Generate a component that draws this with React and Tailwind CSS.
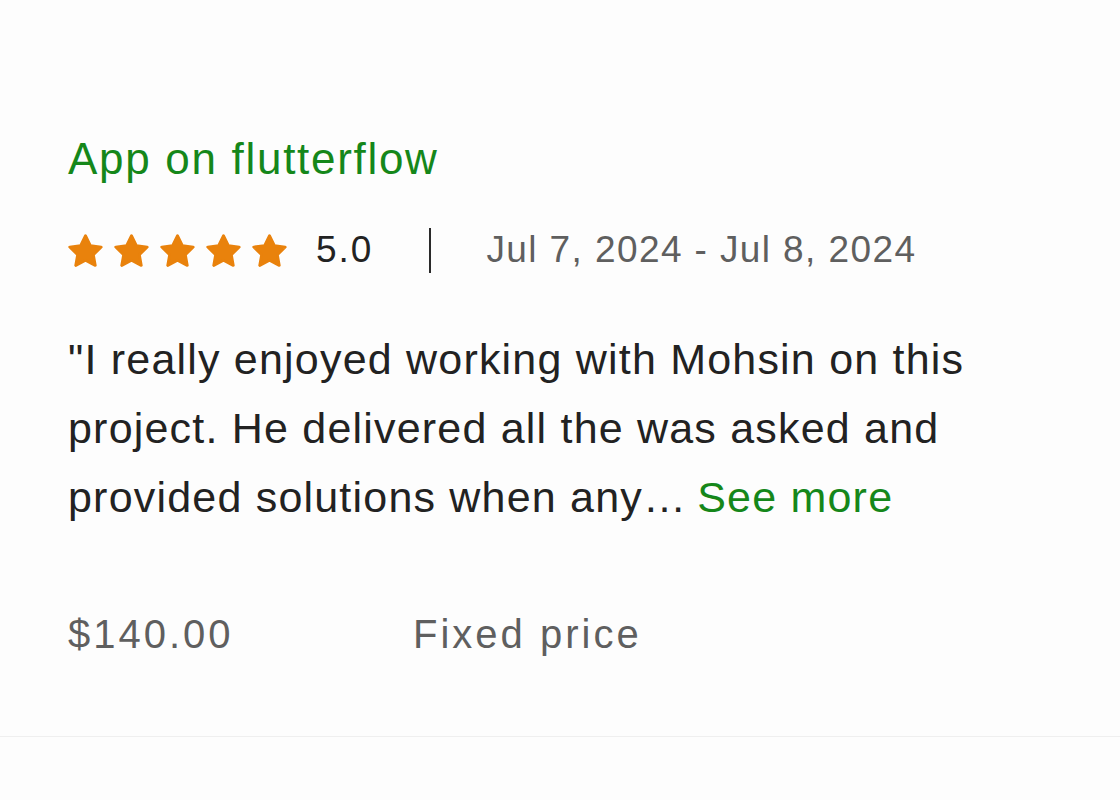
import React from "react";

function Star() {
  return (
    <svg width="35" height="33" viewBox="2 2 20 19" preserveAspectRatio="none" className="shrink-0">
      <polygon
        points="12,3 14.8,8.7 21,9.5 16.5,13.9 17.6,20.1 12,17.1 6.4,20.1 7.5,13.9 3,9.5 9.2,8.7"
        fill="#e9820c"
        stroke="#e9820c"
        strokeWidth="1.6"
        strokeLinejoin="round"
      />
    </svg>
  );
}

export default function App() {
  return (
    <div className="w-[1120px] h-[800px] bg-[#fdfdfd] overflow-hidden font-['Liberation_Sans',Arial,sans-serif]">
      <div className="pl-[68px] pt-[133px]">
        <div className="text-[44px] leading-[52px] tracking-[1.7px] text-[#15871a]">App on flutterflow</div>

        <div className="mt-[41px] h-[48px] flex items-center">
          <div className="flex items-center gap-[11px]">
            <Star />
            <Star />
            <Star />
            <Star />
            <Star />
          </div>
          <span className="ml-[29px] text-[37px] leading-[44px] tracking-[2px] text-[#222222]">5.0</span>
          <div className="ml-[56px] w-[2px] h-[45px] bg-[#2a2a2a]" />
          <span className="ml-[55px] text-[37px] leading-[44px] tracking-[1.4px] text-[#5f5f5f]">
            Jul 7, 2024 - Jul 8, 2024
          </span>
        </div>

        <p className="mt-[51px] text-[43px] leading-[69px] tracking-[1.2px] text-[#222222]">
          "I really enjoyed working with Mohsin on this
          <br />
          project. He delivered all the was asked and
          <br />
          provided solutions when any…
          <span className="ml-[10px] text-[#15871a]">See more</span>
        </p>

        <div className="mt-[78px] flex items-center text-[40px] leading-[48px] tracking-[3px] text-[#5f5f5f]">
          <span className="w-[345px]">$140.00</span>
          <span>Fixed price</span>
        </div>
      </div>
      <div className="mt-[78px] h-[1px] bg-[#efefef]" />
    </div>
  );
}
